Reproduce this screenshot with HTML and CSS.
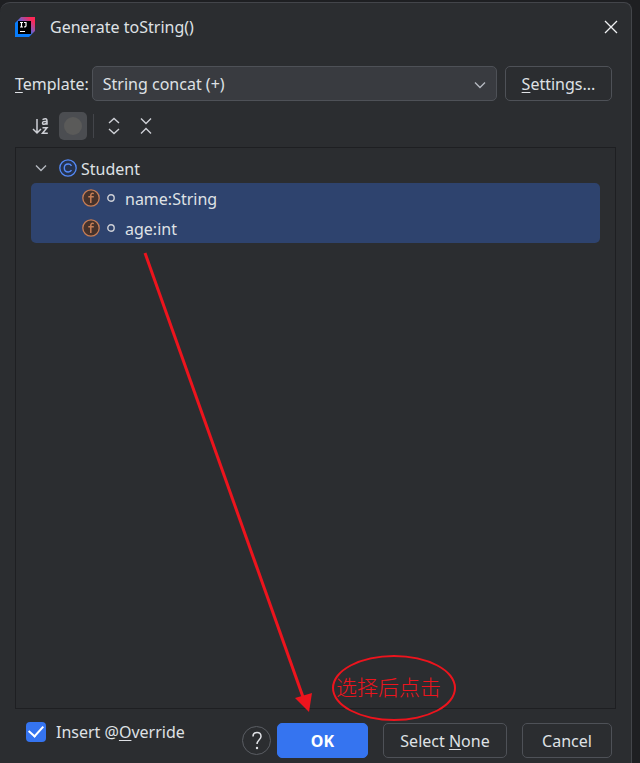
FILE: index.html
```html
<!DOCTYPE html>
<html lang="en">
<head>
<meta charset="utf-8">
<title>Generate toString()</title>
<link rel="stylesheet" href="styles.css">
</head>
<body>
<main class="dialog">
  <header class="titlebar">
    <svg class="logo" width="20" height="20" viewBox="0 0 20 20" aria-hidden="true">
      <defs>
        <linearGradient id="lg" x1="0" y1="1" x2="1" y2="0">
          <stop offset=".4" stop-color="#087cfa"/>
          <stop offset=".6" stop-color="#8b56b5"/>
          <stop offset=".85" stop-color="#fe2857"/>
        </linearGradient>
      </defs>
      <path d="M6 0H20V14L14 20H0V6Z" fill="url(#lg)"/>
      <path d="M3 4H16V17H3Z" fill="#000"/>
      <path d="M5 5.5H8M6.5 5.5V10M5 10H8M9 5.5H11V9Q11 10 9 10M5 14.5H10" fill="none" stroke="#fff" stroke-width="1.2"/>
    </svg>
    <h1 class="title">Generate toString()</h1>
    <button class="close" type="button" aria-label="Close">
      <svg width="14" height="14" viewBox="0 0 14 14"><path d="M1 1L13 13M13 1L1 13" fill="none" stroke="#f0f1f3" stroke-width="1.3"/></svg>
    </button>
  </header>

  <div class="template-row">
    <label for="template"><span class="key">T</span>emplate:</label>
    <div class="select-wrap">
      <select id="template" class="select"><option>String concat (+)</option></select>
      <svg class="select-arrow" width="12" height="8" viewBox="0 0 12 8" aria-hidden="true"><path d="M1 1.5L6 6.5L11 1.5" fill="none" stroke="#b4b8bf" stroke-width="1.4"/></svg>
    </div>
    <button class="btn settings" type="button"><span><span class="key">S</span>ettings...</span></button>
  </div>

  <div class="toolbar">
    <button class="tool" type="button" aria-label="Sort alphabetically">
      <svg width="18" height="20" viewBox="0 0 18 20" fill="none" stroke="#ced0d6" stroke-width="1.5">
        <path d="M6 3V17M2 13L6 17L10 13"/>
        <path d="M11.5 3.6Q16 1.2 16 5V8.800M16 5.500Q11.500 5 11.500 7Q11.500 8.500 13.200 8.300Q15.500 8 16 6.500M11.500 11.800H16L11.500 17.200H16.800"/>
      </svg>
    </button>
    <button class="tool tool-on" type="button" aria-label="Show class">
      <svg width="18" height="18" viewBox="0 0 18 18"><circle cx="9" cy="9" r="9" fill="#5a5a59"/></svg>
    </button>
    <span class="divider"></span>
    <button class="tool" type="button" aria-label="Expand all">
      <svg width="12" height="18" viewBox="0 0 12 18" fill="none" stroke="#ced0d6" stroke-width="1.4"><path d="M1 6L6 1.5L11 6M1 12L6 16.5L11 12"/></svg>
    </button>
    <button class="tool tool-last" type="button" aria-label="Collapse all">
      <svg width="12" height="18" viewBox="0 0 12 18" fill="none" stroke="#ced0d6" stroke-width="1.4"><path d="M1 1.5L6 6.5L11 1.5M1 16.5L6 11.5L11 16.5"/></svg>
    </button>
  </div>

  <section class="tree">
    <div class="row root">
      <svg class="chevron" width="12" height="8" viewBox="0 0 12 8" aria-hidden="true"><path d="M1 1.5L6 6.5L11 1.5" fill="none" stroke="#b4b8bf" stroke-width="1.4"/></svg>
      <svg class="icon" width="18" height="18" viewBox="0 0 18 18" aria-hidden="true">
        <circle cx="9" cy="9" r="8.2" fill="#25324d" stroke="#548af7" stroke-width="1.3"/>
        <path d="M12.5 6.800Q11.500 5 9.300 5Q5.300 5 5.300 9T9.300 13Q11.500 13 12.500 11.200" fill="none" stroke="#548af7" stroke-width="1.4"/>
      </svg>
      <span class="name">Student</span>
    </div>
    <ul class="fields">
      <li class="row field">
        <svg class="icon" width="18" height="18" viewBox="0 0 18 18" aria-hidden="true">
          <circle cx="9" cy="9" r="8.2" fill="#45322b" stroke="#c77d55" stroke-width="1.3"/>
          <path d="M11.8 4.600Q8.800 3.600 8.800 6.500V14M6.300 7.700H11.800" fill="none" stroke="#c77d55" stroke-width="1.5"/>
        </svg>
        <svg class="dot" width="8" height="8" viewBox="0 0 8 8" aria-hidden="true"><circle cx="4" cy="4" r="3.2" fill="none" stroke="#ced0d6" stroke-width="1.4"/></svg>
        <span class="name">name:String</span>
      </li>
      <li class="row field">
        <svg class="icon" width="18" height="18" viewBox="0 0 18 18" aria-hidden="true">
          <circle cx="9" cy="9" r="8.2" fill="#45322b" stroke="#c77d55" stroke-width="1.3"/>
          <path d="M11.8 4.600Q8.800 3.600 8.800 6.500V14M6.300 7.700H11.800" fill="none" stroke="#c77d55" stroke-width="1.5"/>
        </svg>
        <svg class="dot" width="8" height="8" viewBox="0 0 8 8" aria-hidden="true"><circle cx="4" cy="4" r="3.2" fill="none" stroke="#ced0d6" stroke-width="1.4"/></svg>
        <span class="name">age:int</span>
      </li>
    </ul>
  </section>

  <footer class="footer">
    <label class="override"><input class="check" type="checkbox" checked><span>Insert @<span class="key">O</span>verride</span></label>
    <button class="help" type="button" aria-label="Help">
      <svg width="12" height="20" viewBox="0 0 12 20"><path d="M2 5.5Q2 1.5 6 1.5T10 5.5C10 8.5 6 9 6 13" fill="none" stroke="#dfe1e5" stroke-width="1.5"/><circle cx="6" cy="17" r="1.2" fill="#dfe1e5"/></svg>
    </button>
    <button class="btn ok" type="button">OK</button>
    <button class="btn none" type="button"><span>Select <span class="key">N</span>one</span></button>
    <button class="btn cancel" type="button">Cancel</button>
  </footer>
</main>

<svg class="arrow" width="180" height="470" viewBox="0 0 180 470" aria-hidden="true">
  <path d="M5 3L163 447" stroke="#ed141d" stroke-width="3" fill="none"/>
  <path d="M169 462L155 448L172 443Z" fill="#ed141d"/>
</svg>
<p class="note">选择后点击</p>
</body>
</html>
```

FILE: styles.css
```css
* { box-sizing: border-box; }

body {
  position: relative;
  display: flex;
  min-height: 100vh;
  margin: 0;
  padding: 2px 8px 0 0;
  background: #1e1f22;
  color: #dfe1e5;
  font: 16px/24px "Noto Sans", "Noto Sans CJK SC", sans-serif;
}

button, select, input { font: inherit; color: inherit; margin: 0; }
button { display: flex; align-items: center; justify-content: center; padding: 0; border: 0; background: none; }
svg { display: block; flex: none; }

.dialog {
  flex: 1;
  display: flex;
  flex-direction: column;
  border: solid #43454a;
  border-width: 1px 1px 0 0;
  border-radius: 10px 8px 0 0;
  background: #2b2d30;
  padding: 0 19px 5px 15px;
}

.titlebar { display: flex; align-items: center; height: 48px; }
.title { flex: 1; margin: 0 0 0 15px; font-size: 16px; font-weight: 400; }
.close { width: 14px; height: 14px; margin-right: -6px; }

.template-row { display: flex; align-items: center; height: 35px; margin-top: 15px; }
.select-wrap { position: relative; flex: 1; margin: 0 8px 0 3px; }
.select {
  width: 100%;
  height: 35px;
  padding: 0 10px;
  appearance: none;
  border: 1px solid #4e5157;
  border-radius: 5px;
  background: #393b40;
}
.select-arrow { position: absolute; right: 11px; top: 15px; pointer-events: none; }

.btn { height: 35px; border: 1px solid #4e5157; border-radius: 5px; }
.settings { width: 107px; }
.key { text-decoration: underline; text-decoration-thickness: 1px; text-underline-offset: 2px; }

.toolbar { display: flex; align-items: center; height: 28px; margin: 11px 0 7px 11px; }
.tool { width: 28px; height: 28px; border-radius: 5px; }
.tool-on { margin-left: 5px; background: #4b4d51; }
.divider { width: 1px; height: 24px; margin: 0 6px; background: #43454a; }
.tool-last { margin-left: 4px; }

.tree { flex: 1; min-height: 200px; border: 1px solid #1e1f22; padding: 5px 15px; margin-right: -4px; }
.row { display: flex; align-items: center; height: 30px; }
.root { padding-left: 4px; }
.root .icon { margin: 0 4px 0 12px; }
.fields { margin: 0; padding: 0; list-style: none; border-radius: 5px; background: #2e436e; }
.field { padding-left: 51px; }
.dot { margin: 0 10px 0 7px; }
.name { padding-top: 2px; }

.footer { display: flex; align-items: center; height: 35px; margin-top: 14px; }
.override { display: flex; align-items: center; flex: 1; gap: 10px; margin: 0 0 18px 11px; }
.check { width: 20px; height: 20px; appearance: none; border-radius: 4px; background: #3574f0; display: grid; place-items: center; }
.check:checked::before { content: ""; width: 12px; height: 7px; border: solid #fff; border-width: 0 0 2px 2px; transform: translateY(-2px) rotate(-48deg); }
.help { width: 29px; height: 29px; border: 1px solid #5a5d63; border-radius: 50%; }
.ok { width: 91px; margin-left: 6px; border-color: #3574f0; background: #3574f0; color: #fff; font-weight: 700; }
.none { width: 124px; margin-left: 15px; }
.cancel { width: 90px; margin-left: 15px; }

.arrow { position: absolute; left: 140px; top: 250px; pointer-events: none; }
.note {
  position: absolute;
  left: 332px;
  top: 655px;
  display: flex;
  align-items: center;
  width: 124px;
  height: 66px;
  margin: 0;
  padding: 0 0 4px 2px;
  border: 2px solid #ed141d;
  border-radius: 50%;
  color: #ed141d;
  font-family: "Noto Sans CJK SC", sans-serif;
  font-size: 21px;
  font-weight: 300;
  white-space: nowrap;
  pointer-events: none;
}
```
